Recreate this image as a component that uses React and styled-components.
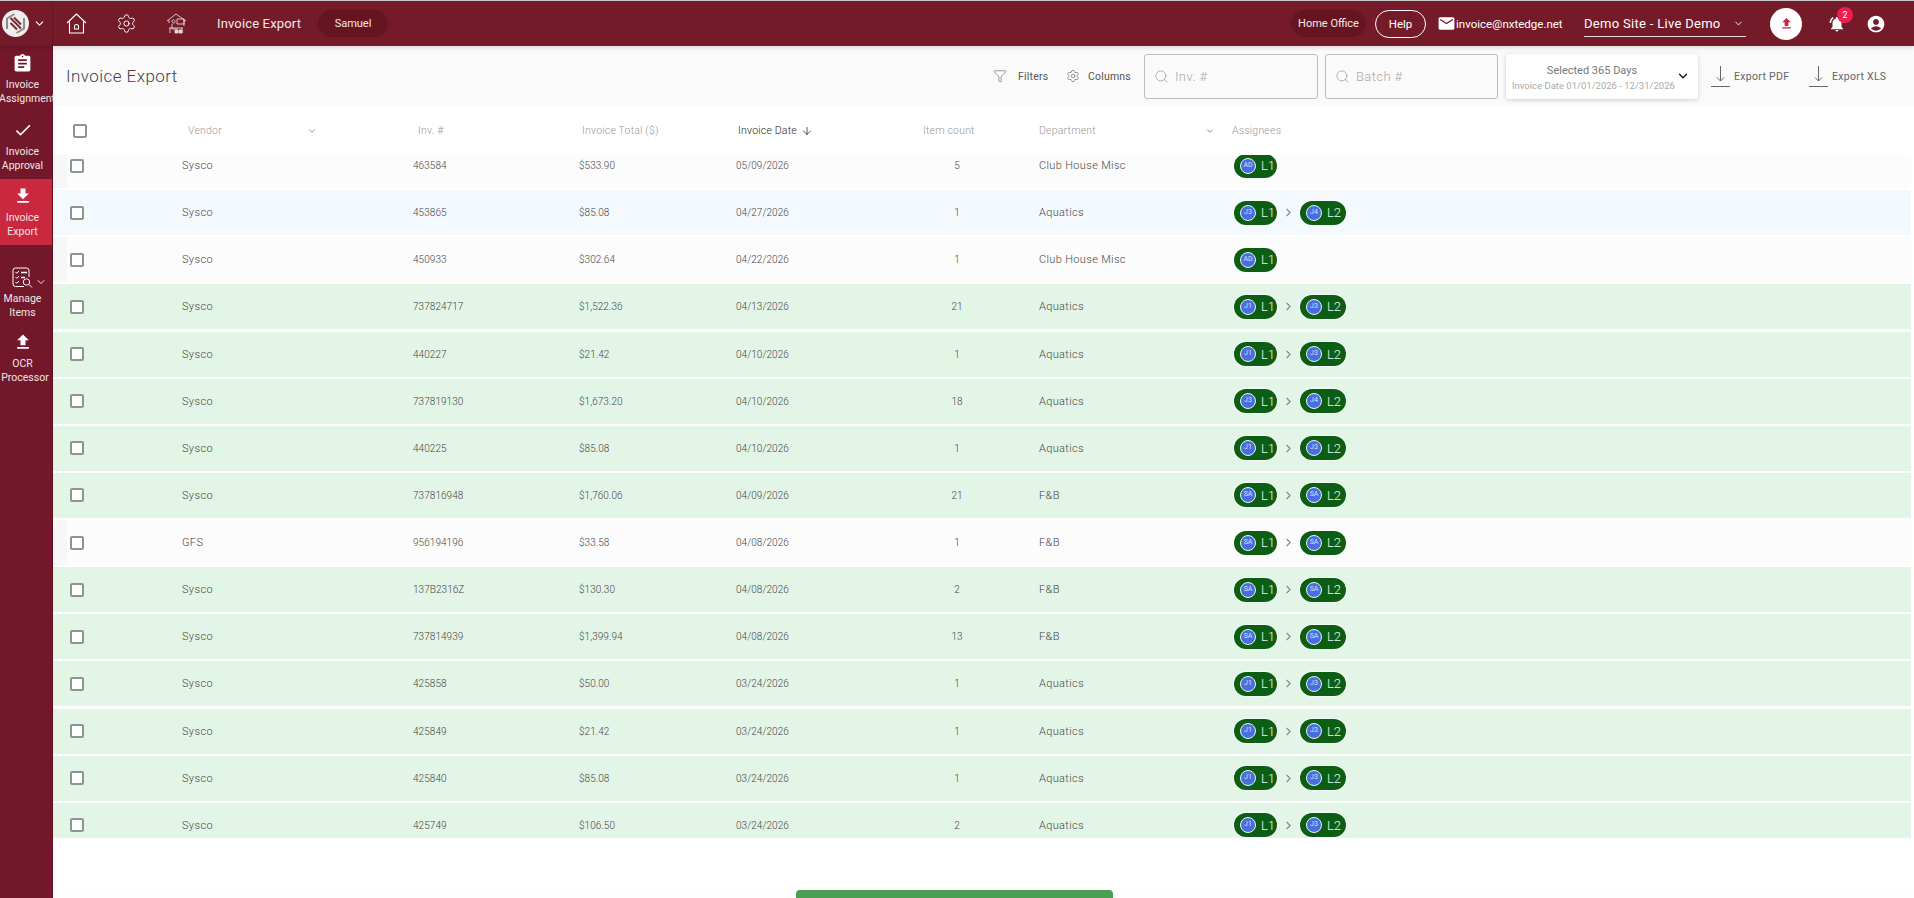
import React from "react";
import styled, { createGlobalStyle } from "styled-components";
import { ArrowDown, ChevronDown, ChevronRight, Filter, Search, Settings } from "lucide-react";
import {
  MdAccountCircle,
  MdAssignment,
  MdCheck,
  MdEmail,
  MdFileDownload,
  MdFileUpload,
  MdNotificationsActive,
} from "react-icons/md";

const GlobalStyle = createGlobalStyle`
  html, body {
    margin: 0;
    padding: 0;
    height: 100%;
    overflow: hidden;
    background: #fff;
    font-family: Roboto, "Liberation Sans", sans-serif;
  }
  * { box-sizing: border-box; }
`;

const Page = styled.div`
  height: 898px;
  overflow: hidden;
  border-top: 1px solid #c9c9c9;
  display: flex;
  flex-direction: column;
`;

/* top bar */
const Header = styled.header`
  height: 45px;
  flex: none;
  display: flex;
  align-items: center;
  background: #751a29;
  color: #fff;
  position: relative;
  z-index: 2;
  box-shadow: 0 2px 4px rgba(0, 0, 0, 0.12);
`;

const LogoCell = styled.div`
  width: 53px;
  height: 100%;
  flex: none;
  display: flex;
  align-items: center;
  padding-left: 2px;
  gap: 4px;
  border-right: 1px solid #68131f;
`;

const HeaderIcons = styled.div`
  display: flex;
  align-items: center;
  gap: 29px;
  margin-left: 13px;
  svg { display: block; }
`;

const PageName = styled.div`
  margin-left: 30px;
  width: 101px;
  font-size: 13px;
  letter-spacing: 0.15px;
  color: #f3e9ea;
`;

const DarkPill = styled.div`
  height: 27px;
  width: ${(p) => p.$w}px;
  border-radius: 14px;
  background: #671421;
  display: flex;
  align-items: center;
  justify-content: center;
  font-size: 11px;
  color: #f3e9ea;
  flex: none;
`;

const HeaderRight = styled.div`
  margin-left: auto;
  display: flex;
  align-items: center;
  padding-right: 28px;
`;

const HelpButton = styled.div`
  width: 51px;
  height: 28px;
  margin-left: 9px;
  border: 1px solid #fff;
  border-radius: 14px;
  display: flex;
  align-items: center;
  justify-content: center;
  font-size: 11.5px;
`;

const MailLine = styled.div`
  margin-left: 11px;
  width: 124px;
  display: flex;
  align-items: center;
  font-size: 11.5px;
  svg { flex: none; margin-right: 0; }
`;

const SiteSelect = styled.div`
  margin-left: 23px;
  width: 162px;
  height: 26px;
  border-bottom: 1px solid #e8d8da;
  display: flex;
  align-items: center;
  justify-content: space-between;
  padding-right: 2px;
  font-size: 13px;
  letter-spacing: 0.3px;
`;

const UploadCircle = styled.div`
  width: 32px;
  height: 32px;
  margin-left: 24px;
  border-radius: 50%;
  background: #fff;
  color: #c9283f;
  display: flex;
  align-items: center;
  justify-content: center;
`;

const BellWrap = styled.div`
  position: relative;
  width: 18px;
  margin-left: 26px;
  display: flex;
  svg { display: block; }
`;

const Badge = styled.span`
  position: absolute;
  top: -7px;
  left: 9px;
  width: 16px;
  height: 16px;
  border-radius: 50%;
  background: #ee1d52;
  font-size: 9px;
  line-height: 16px;
  text-align: center;
`;

const UserWrap = styled.div`
  margin-left: 20px;
  display: flex;
`;

/* left nav + content */
const Body = styled.div`
  flex: 1;
  min-height: 0;
  display: flex;
`;

const Sidebar = styled.nav`
  width: 53px;
  flex: none;
  background: #72182a;
  color: #f0e4e6;
  border-right: 1px solid #6a1424;
`;

const NavItem = styled.div`
  height: ${(p) => p.$h || 66}px;
  padding: ${(p) => p.$top || 8}px 7px 0 0;
  background: ${(p) => (p.$active ? "#c9283f" : "transparent")};
  display: flex;
  flex-direction: column;
  align-items: center;
  position: relative;
`;

const NavIcon = styled.div`
  height: ${(p) => p.$h || 18}px;
  margin-bottom: ${(p) => p.$gap ?? 6}px;
  display: flex;
  align-items: center;
  color: #fff;
`;

const NavLabel = styled.div`
  font-size: 10.5px;
  line-height: 13.5px;
  margin-left: ${(p) => p.$nudge || 0}px;
  text-align: center;
  white-space: nowrap;
`;

const NavCaret = styled.span`
  position: absolute;
  top: 31px;
  left: 35px;
  display: flex;
`;

const Main = styled.main`
  flex: 1;
  min-width: 0;
  display: flex;
  flex-direction: column;
`;

const Toolbar = styled.div`
  height: 60px;
  flex: none;
  background: #fafafa;
  display: flex;
  align-items: center;
  padding: 0 26px 0 13px;
`;

const Title = styled.h1`
  margin: 0;
  font-size: 17px;
  font-weight: 300;
  letter-spacing: 0.45px;
  color: #444;
`;

const ToolRight = styled.div`
  margin-left: auto;
  display: flex;
  align-items: center;
`;

const ToolLink = styled.div`
  display: flex;
  align-items: center;
  gap: ${(p) => p.$gap}px;
  width: ${(p) => p.$w}px;
  margin-right: ${(p) => p.$mr}px;
  font-size: 10.5px;
  letter-spacing: 0.2px;
  color: #555;
  svg { flex: none; }
`;

const SearchBox = styled.label`
  width: ${(p) => p.$w}px;
  height: 45px;
  margin-right: ${(p) => p.$mr}px;
  border: 1px solid #bdbdbd;
  border-radius: 3px;
  display: flex;
  align-items: center;
  padding-left: 9px;
  gap: 4px;
  color: #888;
`;

const SearchInput = styled.input`
  border: 0;
  outline: 0;
  background: transparent;
  width: 120px;
  font: 300 13px Roboto, sans-serif;
  letter-spacing: 0.4px;
  &::placeholder { color: #aaa; opacity: 1; }
`;

const DateBox = styled.div`
  width: 192px;
  height: 45px;
  margin-right: 13px;
  padding: 0 0 0 6px;
  background: #fff;
  border-radius: 3px;
  box-shadow: 0 1px 4px rgba(0, 0, 0, 0.18);
  display: flex;
  align-items: center;
  position: relative;
`;

const DateText = styled.div`
  width: 160px;
  padding-top: 2px;
  text-align: center;
`;

const DateMain = styled.div`
  font-size: 11px;
  color: #777;
  margin-bottom: 3px;
`;

const DateSub = styled.div`
  font-size: 9.5px;
  color: #aaa;
  white-space: nowrap;
`;

const DateCaret = styled.span`
  display: flex;
  margin-left: 4px;
  color: #111;
`;

const ExportLink = styled.div`
  display: flex;
  align-items: center;
  gap: 4px;
  width: 79px;
  margin-left: ${(p) => p.$ml || 0}px;
  font-size: 10.5px;
  letter-spacing: 0.3px;
  color: #666;
  white-space: nowrap;
`;

/* table */
const TableHead = styled.div`
  height: 49px;
  flex: none;
  display: grid;
  grid-template-columns: 115px 230px 164px 156px 185px 116px 193px 1fr;
  align-items: center;
  padding-left: 20px;
  font-size: 10.5px;
  font-weight: 300;
`;

const HeadCell = styled.div`
  display: flex;
  align-items: center;
  color: ${(p) => (p.$sorted ? "#222" : "#999")};
  letter-spacing: 0.2px;
  gap: 4px;
`;

const HeadCaret = styled.span`
  display: flex;
  margin-left: ${(p) => p.$ml}px;
  color: #777;
`;

const ListWrap = styled.div`
  height: 683px;
  flex: none;
  overflow: hidden;
  box-shadow: 0 1px 2px rgba(0, 0, 0, 0.16);
`;

const List = styled.div`
  margin-top: -12px;
  display: flex;
  flex-direction: column;
  gap: 2.14px;
`;

const rowColors = {
  white: "linear-gradient(90deg, #f7f7f7 14px, #fcfcfc 14px)",
  blue: "#f4f9fe",
  green: "#e3f5e6",
};

const Row = styled.div`
  height: 45px;
  flex: none;
  margin-right: 3px;
  display: grid;
  grid-template-columns: 112px 231px 166px 157px 187px 116px 195px 1fr;
  align-items: center;
  padding-left: 17px;
  background: ${(p) => rowColors[p.$tone]};
  color: #464646;
`;

const Check = styled.input.attrs({ type: "checkbox" })`
  appearance: none;
  width: 14px;
  height: 14px;
  margin: 0;
  display: block;
  border: 2px solid #8b968d;
  border-radius: 2px;
  background: #fff;
`;

const TextCell = styled.div`
  font-size: 11px;
  font-weight: 300;
  letter-spacing: 0.35px;
  white-space: nowrap;
`;

const NumCell = styled.div`
  font-size: 10px;
  font-weight: 300;
  letter-spacing: 0.05px;
  white-space: nowrap;
`;

const CountCell = styled(NumCell)`
  width: 68px;
  text-align: center;
`;

const Assignees = styled.div`
  display: flex;
  align-items: center;
  color: #888;
`;

const Pill = styled.div`
  width: ${(p) => p.$w}px;
  height: 24px;
  border-radius: 12px;
  background: #0b5e14;
  box-shadow: 0 0 1px 1px rgba(255, 255, 255, 0.7);
  display: flex;
  align-items: center;
  padding-left: 6px;
  gap: 5px;
  font-size: 13px;
  font-weight: 300;
  color: #eef6ee;
`;

const Avatar = styled.span`
  width: 16px;
  height: 16px;
  border-radius: 50%;
  border: 1.5px solid #edf5ed;
  background: #4a6ee0;
  color: #d8e0f8;
  font-size: 7px;
  font-weight: 400;
  line-height: 13px;
  text-align: center;
  flex: none;
`;

const Arrow = styled.span`
  width: 23px;
  display: flex;
  justify-content: center;
`;

const Spacer = styled.div`
  height: 50px;
  flex: none;
  background: #fff;
`;

const Footer = styled.div`
  flex: 1;
  display: flex;
  justify-content: center;
  padding: 2px 59px 0 0;
  background: #fdfdfd;
`;

const ApplyButton = styled.button`
  width: 317px;
  height: 40px;
  flex: none;
  border: 0;
  border-radius: 4px;
  background: #4a9f52;
`;

const rows = [
  ["Sysco", "463584", "$533.90", "05/09/2026", "5", "Club House Misc", "white", "AD"],
  ["Sysco", "453865", "$85.08", "04/27/2026", "1", "Aquatics", "blue", "J3", "J4"],
  ["Sysco", "450933", "$302.64", "04/22/2026", "1", "Club House Misc", "white", "AD"],
  ["Sysco", "737824717", "$1,522.36", "04/13/2026", "21", "Aquatics", "green", "J1", "J3"],
  ["Sysco", "440227", "$21.42", "04/10/2026", "1", "Aquatics", "green", "J1", "J3"],
  ["Sysco", "737819130", "$1,673.20", "04/10/2026", "18", "Aquatics", "green", "J3", "J4"],
  ["Sysco", "440225", "$85.08", "04/10/2026", "1", "Aquatics", "green", "J1", "J3"],
  ["Sysco", "737816948", "$1,760.06", "04/09/2026", "21", "F&B", "green", "SA", "SA"],
  ["GFS", "956194196", "$33.58", "04/08/2026", "1", "F&B", "white", "SA", "SA"],
  ["Sysco", "137B2316Z", "$130.30", "04/08/2026", "2", "F&B", "green", "SA", "SA"],
  ["Sysco", "737814939", "$1,399.94", "04/08/2026", "13", "F&B", "green", "SA", "SA"],
  ["Sysco", "425858", "$50.00", "03/24/2026", "1", "Aquatics", "green", "J1", "J3"],
  ["Sysco", "425849", "$21.42", "03/24/2026", "1", "Aquatics", "green", "J1", "J3"],
  ["Sysco", "425840", "$85.08", "03/24/2026", "1", "Aquatics", "green", "J1", "J3"],
  ["Sysco", "425749", "$106.50", "03/24/2026", "2", "Aquatics", "green", "J1", "J3"],
];

const Logo = () => (
  <svg width="27" height="27" viewBox="0 0 27 27">
    <circle cx="13.5" cy="13.5" r="13.5" fill="#efeeec" />
    <path d="M5 19V8.5L12.5 4M22 8v10.5L14.5 23" fill="none" stroke="#8c8c88" strokeWidth="2" />
    <path d="M8.5 8 19 18.5M8.5 13 15 19.5M12 7.5l7 7" fill="none" stroke="#7b2a38" strokeWidth="2" />
  </svg>
);

const HomeIcon = () => (
  <svg width="21" height="21" viewBox="0 0 21 21" fill="none" stroke="#fff" strokeWidth="1.1">
    <path d="M1 10 10.5 1 20 10M3.5 8.5V20h14V8.5" strokeLinejoin="round" />
    <path d="M8.5 16v-2.5a2 2 0 0 1 4 0V16z" />
  </svg>
);

const OfficeIcon = () => (
  <svg width="21" height="21" viewBox="0 0 21 21" fill="none" stroke="#e7d6d8" strokeWidth="0.9">
    <path d="M1 8 10 1l10 7M3 7v3M18 7v6" />
    <path d="M11 6h7v5h-7zM7 10a1.6 1.6 0 1 0 0-3 1.6 1.6 0 0 0 0 3zM6 11v5h6M3 15h14M4 15v5M16 15v5" />
    <path d="M9 17h3v3H9zM13 17h3v3h-3z" fill="#e7d6d8" />
  </svg>
);

const ManageIcon = () => (
  <svg width="21" height="21" viewBox="0 0 21 21" fill="none" stroke="#fff" strokeWidth="1">
    <path d="M12 19.5H3.5a2.5 2.5 0 0 1-2.5-2.5V3.5A2.5 2.5 0 0 1 3.5 1h11A2.5 2.5 0 0 1 17 3.5V10" />
    <path d="M3.5 5l1.3 1.3L7 4M3.5 10l1.3 1.3L7 9M3.5 15l1.3 1.3L7 14" />
    <path d="M9 5.5h6M9 10.5h4" strokeWidth="1.6" />
    <circle cx="14.5" cy="15" r="3.2" />
    <path d="m17 17.5 3 3" />
  </svg>
);

const ExportIcon = () => (
  <svg width="19" height="24" viewBox="0 0 19 24" fill="none" stroke="#666" strokeWidth="1">
    <path d="M9.5 2v15M6 13.5l3.5 3.5 3.5-3.5M0 22.5h19" />
  </svg>
);

const Person = ({ id, level, w }) => (
  <Pill $w={w}>
    <Avatar>{id}</Avatar>
    {level}
  </Pill>
);

export default function App() {
  return (
    <>
      <GlobalStyle />
      <Page>
        <Header>
          <LogoCell>
            <Logo />
            <ChevronDown size={13} strokeWidth={2} />
          </LogoCell>
          <HeaderIcons>
            <HomeIcon />
            <Settings size={21} strokeWidth={1.1} />
            <OfficeIcon />
          </HeaderIcons>
          <PageName>Invoice Export</PageName>
          <DarkPill $w={70}>Samuel</DarkPill>
          <HeaderRight>
            <DarkPill $w={75}>Home Office</DarkPill>
            <HelpButton>Help</HelpButton>
            <MailLine>
              <MdEmail size={19} />
              invoice@nxtedge.net
            </MailLine>
            <SiteSelect>
              Demo Site - Live Demo
              <ChevronDown size={11} />
            </SiteSelect>
            <UploadCircle>
              <MdFileUpload size={15} />
            </UploadCircle>
            <BellWrap>
              <MdNotificationsActive size={20} />
              <Badge>2</Badge>
            </BellWrap>
            <UserWrap>
              <MdAccountCircle size={20} />
            </UserWrap>
          </HeaderRight>
        </Header>
        <Body>
          <Sidebar>
            <NavItem>
              <NavIcon>
                <MdAssignment size={21} />
              </NavIcon>
              <NavLabel>Invoice</NavLabel>
              <NavLabel $nudge={9}>Assignment</NavLabel>
            </NavItem>
            <NavItem $h={67} $top={9}>
              <NavIcon>
                <MdCheck size={20} />
              </NavIcon>
              <NavLabel>Invoice</NavLabel>
              <NavLabel>Approval</NavLabel>
            </NavItem>
            <NavItem $active>
              <NavIcon>
                <MdFileDownload size={20} />
              </NavIcon>
              <NavLabel>Invoice</NavLabel>
              <NavLabel>Export</NavLabel>
            </NavItem>
            <NavItem $h={80} $top={22}>
              <NavIcon $h={21} $gap={4}>
                <ManageIcon />
              </NavIcon>
              <NavCaret>
                <ChevronDown size={12} strokeWidth={2} />
              </NavCaret>
              <NavLabel>Manage</NavLabel>
              <NavLabel>Items</NavLabel>
            </NavItem>
            <NavItem>
              <NavIcon>
                <MdFileUpload size={20} />
              </NavIcon>
              <NavLabel>OCR</NavLabel>
              <NavLabel $nudge={5}>Processor</NavLabel>
            </NavItem>
          </Sidebar>
          <Main>
            <Toolbar>
              <Title>Invoice Export</Title>
              <ToolRight>
                <ToolLink $gap={11} $w={54} $mr={19}>
                  <Filter size={14} strokeWidth={1} />
                  Filters
                </ToolLink>
                <ToolLink $gap={8} $w={65} $mr={13}>
                  <Settings size={14} strokeWidth={1} />
                  Columns
                </ToolLink>
                <SearchBox $w={174} $mr={7}>
                  <Search size={15} strokeWidth={1} />
                  <SearchInput placeholder="Inv. #" />
                </SearchBox>
                <SearchBox $w={173} $mr={8}>
                  <Search size={15} strokeWidth={1} />
                  <SearchInput placeholder="Batch #" />
                </SearchBox>
                <DateBox>
                  <DateText>
                    <DateMain>Selected 365 Days</DateMain>
                    <DateSub>Invoice Date 01/01/2026 - 12/31/2026</DateSub>
                  </DateText>
                  <DateCaret>
                    <ChevronDown size={14} strokeWidth={2.2} />
                  </DateCaret>
                </DateBox>
                <ExportLink>
                  <ExportIcon />
                  Export PDF
                </ExportLink>
                <ExportLink $ml={19}>
                  <ExportIcon />
                  Export XLS
                </ExportLink>
              </ToolRight>
            </Toolbar>
            <TableHead>
              <Check />
              <HeadCell>
                Vendor
                <HeadCaret $ml={81}>
                  <ChevronDown size={10} />
                </HeadCaret>
              </HeadCell>
              <HeadCell>Inv. #</HeadCell>
              <HeadCell>Invoice Total ($)</HeadCell>
              <HeadCell $sorted>
                Invoice Date
                <ArrowDown size={12} strokeWidth={1.5} />
              </HeadCell>
              <HeadCell>Item count</HeadCell>
              <HeadCell>
                Department
                <HeadCaret $ml={105}>
                  <ChevronDown size={10} />
                </HeadCaret>
              </HeadCell>
              <HeadCell>Assignees</HeadCell>
            </TableHead>
            <ListWrap>
              <List>
                {rows.map(([vendor, inv, total, date, count, dept, tone, first, second]) => (
                  <Row key={inv} $tone={tone}>
                    <Check />
                    <TextCell>{vendor}</TextCell>
                    <NumCell>{inv}</NumCell>
                    <NumCell>{total}</NumCell>
                    <NumCell>{date}</NumCell>
                    <CountCell>{count}</CountCell>
                    <TextCell>{dept}</TextCell>
                    <Assignees>
                      <Person id={first} level="L1" w={43} />
                      {second && (
                        <>
                          <Arrow>
                            <ChevronRight size={13} strokeWidth={2} />
                          </Arrow>
                          <Person id={second} level="L2" w={46} />
                        </>
                      )}
                    </Assignees>
                  </Row>
                ))}
              </List>
            </ListWrap>
            <Spacer />
            <Footer>
              <ApplyButton aria-label="Export" />
            </Footer>
          </Main>
        </Body>
      </Page>
    </>
  );
}
